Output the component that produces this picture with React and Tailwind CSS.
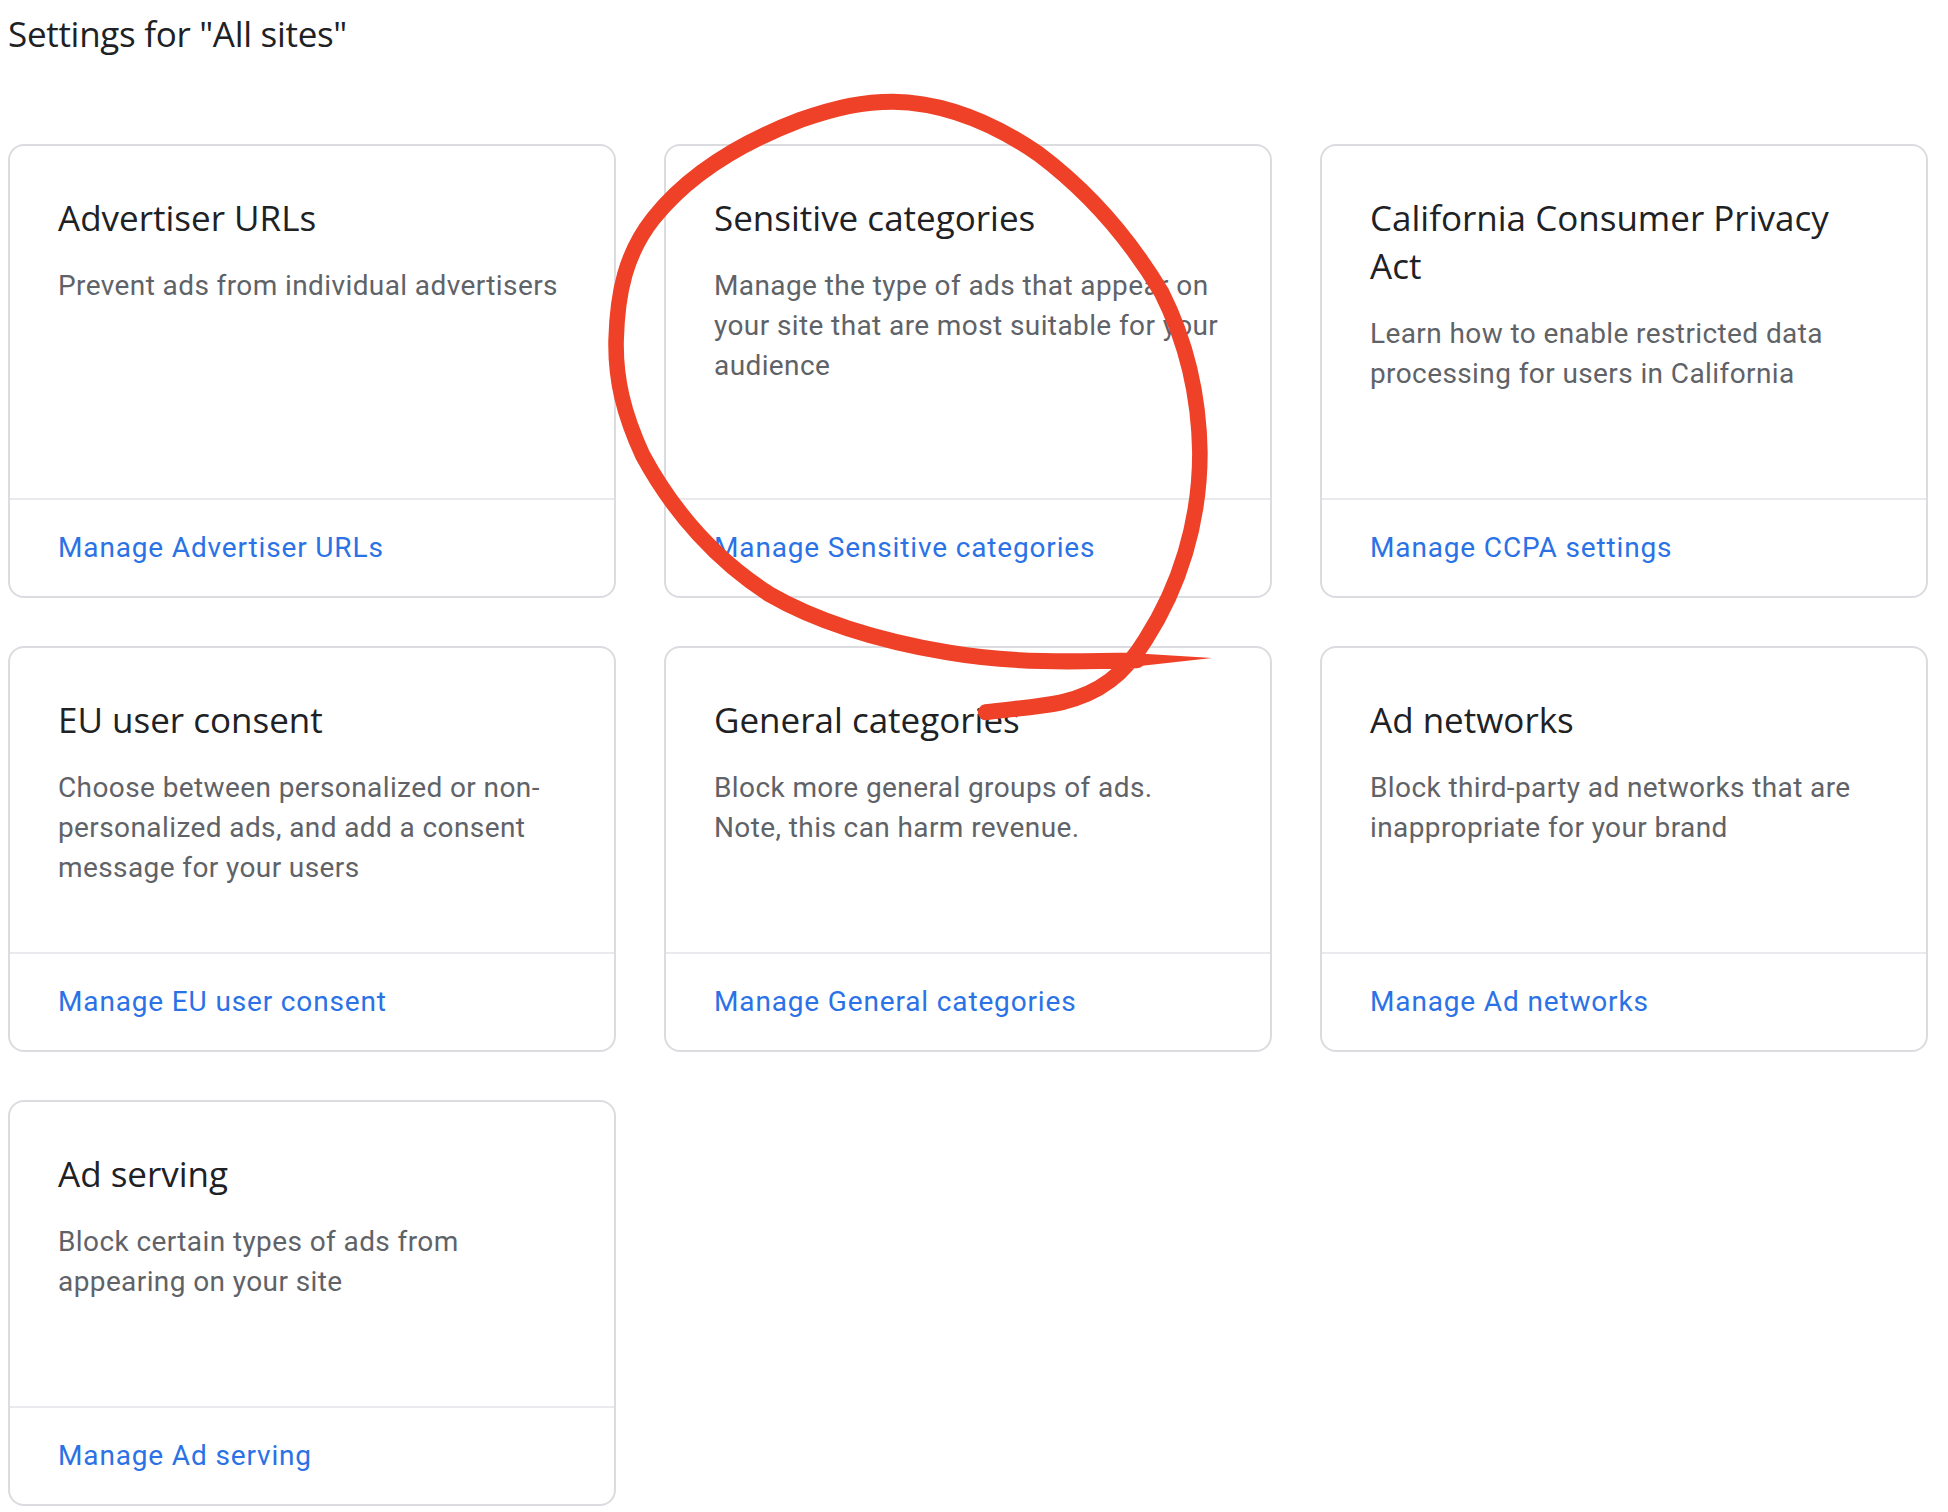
const cards = [
  [
    { title: "Advertiser URLs", text: "Prevent ads from individual advertisers", link: "Manage Advertiser URLs" },
    { title: "Sensitive categories", text: "Manage the type of ads that appear on your site that are most suitable for your audience", link: "Manage Sensitive categories" },
    { title: "California Consumer Privacy Act", text: "Learn how to enable restricted data processing for users in California", link: "Manage CCPA settings" },
  ],
  [
    { title: "EU user consent", text: "Choose between personalized or non-personalized ads, and add a consent message for your users", link: "Manage EU user consent" },
    { title: "General categories", text: "Block more general groups of ads. Note, this can harm revenue.", link: "Manage General categories" },
    { title: "Ad networks", text: "Block third-party ad networks that are inappropriate for your brand", link: "Manage Ad networks" },
  ],
  [
    { title: "Ad serving", text: "Block certain types of ads from appearing on your site", link: "Manage Ad serving" },
  ],
];

const Card = ({ card, tall }) => (
  <div className={`flex flex-col rounded-[16px] border-2 border-[#dadce0] bg-white ${tall ? "h-[454px]" : "h-[406px]"}`}>
    <div className="flex-1 px-[48px] pt-[48px]">
      <h2 className="font-['Open_Sans',sans-serif] text-[35px] leading-[48px] text-[#202124]">{card.title}</h2>
      <p className="mt-[24px] font-['Roboto',sans-serif] text-[28px] leading-[40px] tracking-[0.4px] text-[#5f6368]">{card.text}</p>
    </div>
    <div className="flex h-[98px] items-center border-t-2 border-[#e8eaed] px-[48px]">
      <a className="font-['Roboto',sans-serif] text-[28px] font-[450] tracking-[0.85px] text-[#2a72e5]">{card.link}</a>
    </div>
  </div>
);

// hand-drawn red circle over the page, traced in zoomed coordinates
const Scribble = () => (
  <svg className="absolute left-[590px] top-[80px] h-[680px] w-[660px]" viewBox="0 0 1568 1568" preserveAspectRatio="none" fill="none">
    <path
      d="M1300 1338 C1150 1342 1000 1345 850 1320 C700 1295 550 1255 425 1185 C305 1110 200 1000 125 865 C80 770 60 690 62 600 C65 490 85 400 150 320 C240 210 370 140 500 92 C590 62 650 50 720 50 C845 52 960 100 1065 170 C1175 250 1278 360 1358 490 C1415 600 1447 720 1449 860 C1449 1020 1400 1170 1320 1290 C1270 1370 1210 1415 1120 1435 C1060 1447 1000 1450 940 1458"
      stroke="#ee4127"
      strokeWidth="37"
      strokeLinecap="round"
    />
    <path d="M1478 1333 L1295 1322 L1280 1354 Z" fill="#ee4127" />
  </svg>
);

export default function App() {
  return (
    <div className="relative h-[1512px] w-[1948px] overflow-hidden bg-white pl-[8px] pr-[20px]">
      <h1 className="h-[144px] pt-[12px] font-['Open_Sans',sans-serif] text-[35px] leading-[44px] tracking-[-0.3px] text-[#202124]">Settings for "All sites"</h1>
      <div className="flex flex-col gap-[48px]">
        {cards.map((row, i) => (
          <div key={i} className="grid grid-cols-3 gap-[48px]">
            {row.map((card) => (
              <Card key={card.title} card={card} tall={i === 0} />
            ))}
          </div>
        ))}
      </div>
      <Scribble />
    </div>
  );
}
